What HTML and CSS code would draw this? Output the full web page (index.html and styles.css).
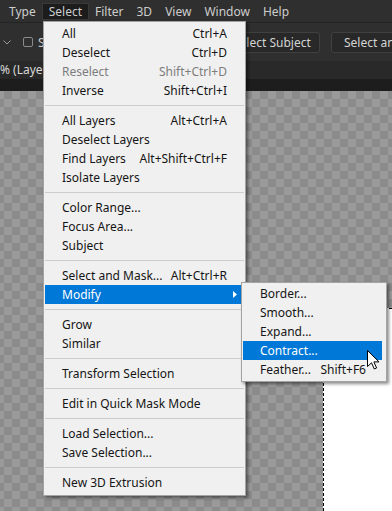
FILE: index.html
```html
<!DOCTYPE html>
<html lang="en">
  <head>
    <meta charset="UTF-8">
    <title>Select menu</title>
    <link rel="stylesheet" href="styles.css">
  </head>

  <body>
    <div class="app">
      <div class="menubar">
        <span class="mb-item">Type</span>
        <span class="mb-item active">Select</span>
        <span class="mb-item">Filter</span>
        <span class="mb-item">3D</span>
        <span class="mb-item">View</span>
        <span class="mb-item">Window</span>
        <span class="mb-item">Help</span>
      </div>

      <div class="options">
        <svg class="chev" width="8" height="5" viewBox="0 0 8 5">
          <path d="M0.5 0.5 L4 4 L7.5 0.5" fill="none" stroke="#9a9a9a" stroke-width="1"/>
        </svg>
        <span class="check"></span>
        <span class="opt-label">Sample All Layers</span>
        <span class="btn btn-subject">Select Subject</span>
        <span class="btn btn-mask">Select and Mask...</span>
      </div>

      <div class="tabs"><span class="tab">% (Layer 1, RGB/8)</span></div>
      <div class="gutter"></div>

      <div class="canvas">
        <div class="selection"></div>
      </div>

      <div class="menu menu-main">
        <div class="mi"><span>All</span><span>Ctrl+A</span></div>
        <div class="mi"><span>Deselect</span><span>Ctrl+D</span></div>
        <div class="mi disabled"><span>Reselect</span><span>Shift+Ctrl+D</span></div>
        <div class="mi"><span>Inverse</span><span>Shift+Ctrl+I</span></div>
        <div class="sep"></div>
        <div class="mi"><span>All Layers</span><span>Alt+Ctrl+A</span></div>
        <div class="mi"><span>Deselect Layers</span></div>
        <div class="mi"><span>Find Layers</span><span>Alt+Shift+Ctrl+F</span></div>
        <div class="mi"><span>Isolate Layers</span></div>
        <div class="sep"></div>
        <div class="mi"><span>Color Range...</span></div>
        <div class="mi"><span>Focus Area...</span></div>
        <div class="mi"><span>Subject</span></div>
        <div class="sep"></div>
        <div class="mi"><span>Select and Mask...</span><span>Alt+Ctrl+R</span></div>
        <div class="mi hl">
          <span>Modify</span>
          <svg class="arrow" width="4" height="7" viewBox="0 0 4 7"><path d="M0 0 L4 3.5 L0 7 Z" fill="#fff"/></svg>
        </div>
        <div class="sep"></div>
        <div class="mi"><span>Grow</span></div>
        <div class="mi"><span>Similar</span></div>
        <div class="sep"></div>
        <div class="mi"><span>Transform Selection</span></div>
        <div class="sep"></div>
        <div class="mi"><span>Edit in Quick Mask Mode</span></div>
        <div class="sep"></div>
        <div class="mi"><span>Load Selection...</span></div>
        <div class="mi"><span>Save Selection...</span></div>
        <div class="sep"></div>
        <div class="mi"><span>New 3D Extrusion</span></div>
      </div>

      <div class="menu menu-sub">
        <div class="mi"><span>Border...</span></div>
        <div class="mi"><span>Smooth...</span></div>
        <div class="mi"><span>Expand...</span></div>
        <div class="mi hl"><span>Contract...</span></div>
        <div class="mi"><span>Feather...</span><span>Shift+F6</span></div>
      </div>

      <svg class="cursor" width="13" height="20" viewBox="0 0 13 20">
        <path d="M0.5 0.5 L0.5 16.5 L4.5 12.8 L7.3 19 L9.6 18 L6.9 11.9 L12 11.9 Z" fill="#fff" stroke="#000" stroke-width="1" stroke-linejoin="miter"/>
      </svg>
    </div>
  </body>
</html>
```

FILE: styles.css
```css
body {
  margin: 0;
  font-family: 'Noto Sans', sans-serif;
  font-size: 12px;
  background: #1e1e1e;
}

.app {
  position: relative;
  width: 392px;
  height: 511px;
  overflow: hidden;
}

/* top menu bar */
.menubar {
  height: 22px;
  display: flex;
  align-items: center;
  padding-left: 2.5px;
  background: #2f2f2f;
  color: #cdcdcd;
}
.mb-item {
  padding: 0 5.5px;
  line-height: 15px;
  border: 1px solid transparent;
}
.mb-item.active {
  background: #1c1c1c;
  border-color: #393939;
}

/* options bar */
.options {
  height: 38px;
  display: flex;
  align-items: center;
  border-top: 1px solid #242424;
  background: #2f2f2f;
  color: #cdcdcd;
  white-space: nowrap;
  overflow: hidden;
}
.chev {
  margin-left: 3px;
  flex: none;
}
.check {
  flex: none;
  width: 8px;
  height: 8px;
  margin-left: 12px;
  border: 1px solid #8a8a8a;
  border-radius: 2px;
}
.opt-label {
  flex: none;
  width: 194px;
  margin-left: 5px;
  overflow: hidden;
}
.btn {
  flex: none;
  height: 19px;
  line-height: 19px;
  border: 1px solid #404040;
  border-radius: 3px;
  background: #282828;
  color: #d4d4d4;
}
.btn-subject {
  width: 74px;
  padding-right: 12px;
  text-align: right;
}
.btn-mask {
  width: 110px;
  margin-left: 11px;
  padding-left: 12px;
}

/* document tab and canvas */
.tabs {
  height: 18px;
  line-height: 18px;
  background: #292929;
  color: #d8d8d8;
}
.gutter {
  height: 12px;
  background: #1d1d1d;
}
.canvas {
  position: relative;
  height: 420px;
  background: repeating-conic-gradient(#9a9a9a 0 25%, #8b8b8b 0 50%) 4px 0 / 16px 16px;
}
.selection {
  position: absolute;
  left: 323px;
  top: 217px;
  right: 0;
  bottom: 0;
  background: #fff;
  border-top: 1px dashed #000;
  border-left: 1px dashed #000;
}

/* dropdown menus */
.menu {
  position: absolute;
  background: #f0f0f0;
  border: 1px solid #a3a3a3;
  box-shadow: 2px 2px 3px rgba(0, 0, 0, 0.45);
  color: #151515;
}
.menu-main {
  left: 43px;
  top: 21px;
  width: 201px;
  padding: 2px 0 3px;
}
.menu-sub {
  left: 241px;
  top: 282px;
  width: 144px;
  padding: 1px 0 2px;
}

.mi {
  height: 19px;
  line-height: 19px;
  display: flex;
  justify-content: space-between;
  align-items: center;
  padding: 0 17px;
  margin: 0 1px;
  white-space: nowrap;
}
.menu-sub .mi {
  margin: 0 4px 0 1px;
  padding: 0 16px 0 17px;
}
.mi.disabled {
  color: #7d7d7d;
}
.mi.hl {
  background: #0078d7;
  color: #fff;
}
.arrow {
  margin-right: -10px;
}

.sep {
  height: 1px;
  margin: 5px 1px;
  background: #cccccc;
}

.cursor {
  position: absolute;
  left: 367px;
  top: 350px;
}
```
